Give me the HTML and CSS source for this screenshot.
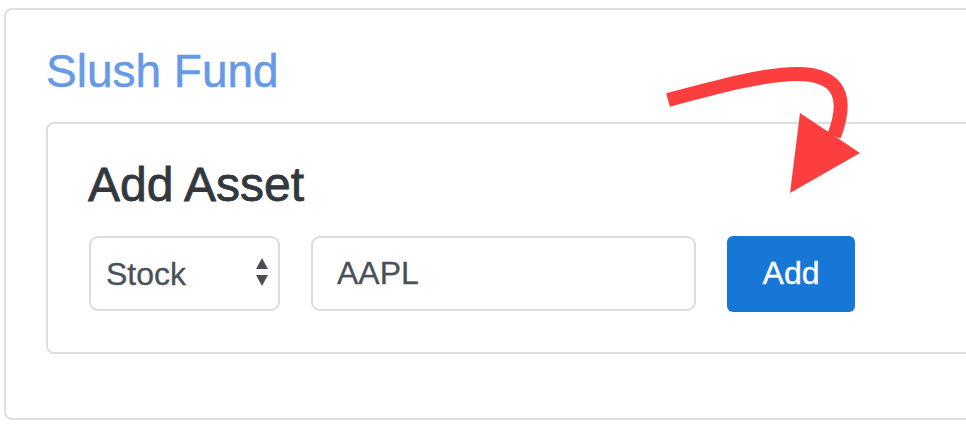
FILE: index.html
```html
<!DOCTYPE html>
<html>
<head>
<meta charset="utf-8">
<link rel="stylesheet" href="styles.css">
</head>
<body>
<div class="page">
  <div class="card">
    <h1 class="title">Slush Fund</h1>
    <div class="panel">
      <h2 class="panel-title">Add Asset</h2>
      <div class="form-row">
        <div class="select-wrap">
          <select class="select">
            <option>Stock</option>
          </select>
          <svg class="select-arrows" width="12" height="30" viewBox="0 0 12 30">
            <polygon points="6,0 12,11 0,11" fill="#4a4f55"/>
            <polygon points="0,17 12,17 6,28" fill="#4a4f55"/>
          </svg>
        </div>
        <input class="text-input" type="text" value="AAPL">
        <button class="btn">Add</button>
      </div>
    </div>
  </div>
  <svg class="annotation" width="966" height="430" viewBox="0 0 966 430">
    <path d="M 668 100 C 720 86, 765 74, 797 74 C 842 74, 848 100, 834 136" fill="none" stroke="#fd3e3e" stroke-width="14"/>
    <polygon points="800,113 860,153 790,193" fill="#fd3e3e"/>
  </svg>
</div>
</body>
</html>
```

FILE: styles.css
```css
html, body {
  margin: 0;
  padding: 0;
  background: #ffffff;
  overflow: hidden;
}

.page {
  position: relative;
  width: 966px;
  height: 430px;
  padding: 8px 0 0 4px;
  box-sizing: border-box;
  overflow: hidden;
  font-family: "Liberation Sans", Arial, sans-serif;
}

.card {
  width: 1100px;
  border: 2px solid #dedede;
  border-radius: 8px;
  padding: 34px 0 64px 40px;
  box-sizing: border-box;
}

.title {
  margin: 0 0 23px 0;
  font-size: 46px;
  line-height: 1.2;
  font-weight: normal;
  color: #6699e8;
  -webkit-text-stroke: 0.5px #6699e8;
}

.panel {
  border: 2px solid #dedede;
  border-radius: 8px;
  padding: 32px 0 40px 40px;
}

.panel-title {
  margin: 0 0 22px 0;
  font-size: 48px;
  line-height: 1.2;
  font-weight: normal;
  color: #33383d;
  -webkit-text-stroke: 0.8px #33383d;
}

.form-row {
  display: flex;
  align-items: center;
}

.select-wrap {
  position: relative;
  width: 191px;
  height: 75px;
  margin-left: 1px;
}

.select {
  appearance: none;
  -webkit-appearance: none;
  width: 100%;
  height: 100%;
  box-sizing: border-box;
  border: 2px solid #dcdcdc;
  border-radius: 9px;
  background: #ffffff;
  padding: 0 0 0 15px;
  font-family: "Liberation Sans", Arial, sans-serif;
  font-size: 32px;
  color: #495057;
  -webkit-text-stroke: 0.3px #495057;
  outline: none;
}

.select-arrows {
  position: absolute;
  left: 167px;
  top: 22px;
}

.text-input {
  margin-left: 31px;
  width: 385px;
  height: 75px;
  box-sizing: border-box;
  border: 2px solid #dcdcdc;
  border-radius: 9px;
  padding: 0 0 0 24px;
  font-family: "Liberation Sans", Arial, sans-serif;
  font-size: 32px;
  color: #495057;
  -webkit-text-stroke: 0.3px #495057;
  outline: none;
}

.btn {
  margin-left: 31px;
  width: 128px;
  height: 76px;
  border: none;
  border-radius: 6px;
  background: #1777d7;
  color: #ffffff;
  font-family: "Liberation Sans", Arial, sans-serif;
  font-size: 32px;
  -webkit-text-stroke: 0.4px #ffffff;
  padding: 0;
}

.annotation {
  position: absolute;
  left: 0;
  top: 0;
}
```
